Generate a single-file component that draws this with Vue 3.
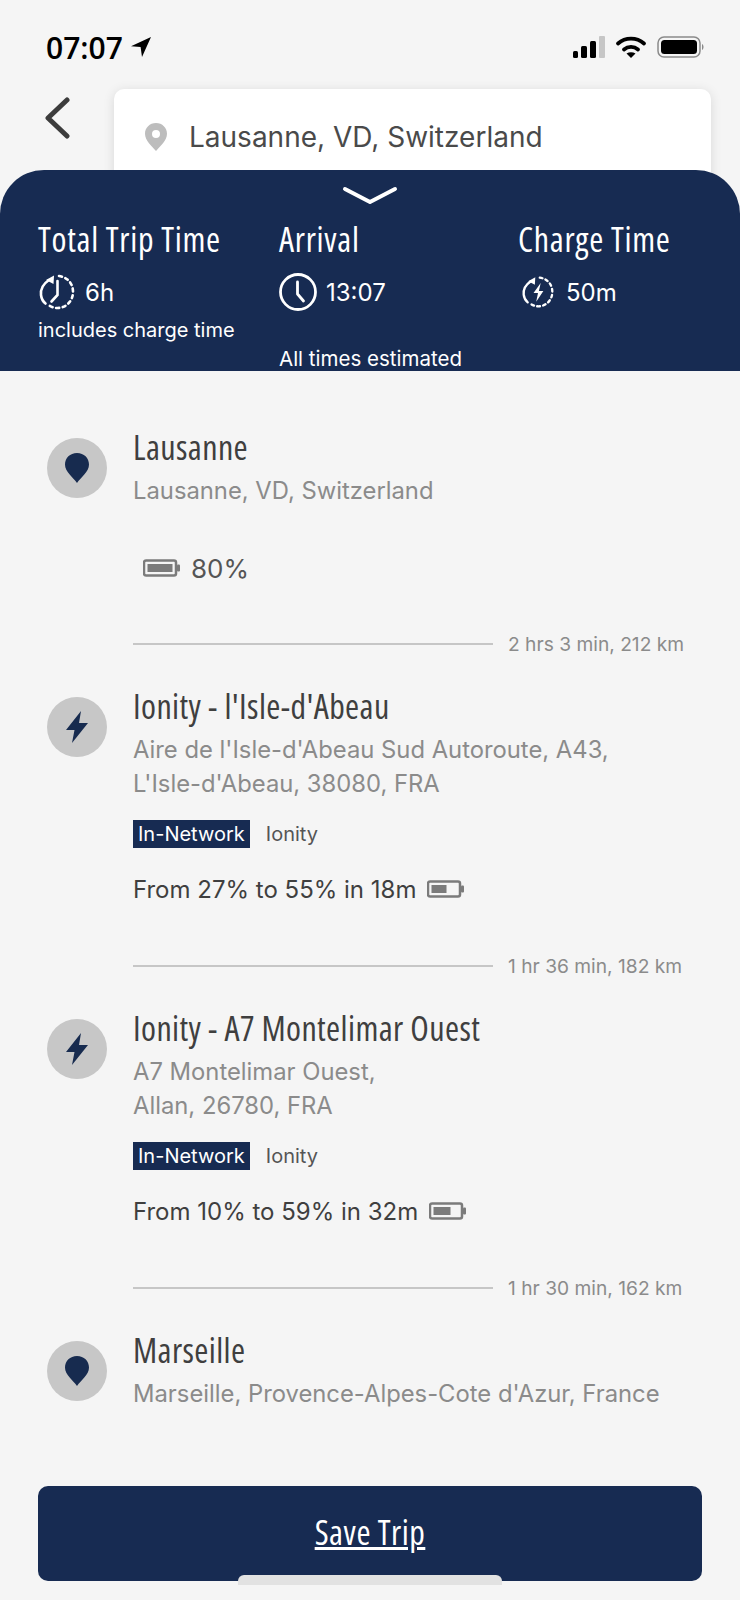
<template>
  <div class="screen">
    <header class="status">
      <div class="status-time">
        <span>07:07</span>
        <svg width="22" height="22" viewBox="0 0 22 22"><path d="M21 1 1 10.200l9.600.9 1.400 9.900z" fill="#000"/></svg>
      </div>
      <div class="status-icons">
        <svg width="32" height="22" viewBox="0 0 32 22">
          <rect x="0" y="15" width="5" height="7" rx="1.500" fill="#000"/>
          <rect x="8" y="10" width="6" height="12" rx="1.500" fill="#000"/>
          <rect x="17" y="5" width="6" height="17" rx="1.500" fill="#000"/>
          <rect x="26" y="0" width="6" height="22" rx="1" fill="#c6c6c6"/>
        </svg>
        <svg width="32" height="24" viewBox="0 0 32 24" fill="none" stroke="#000" stroke-width="3.800" stroke-linecap="round">
          <path d="M3 8.500c7.500-6.600 18.500-6.600 26 0"/>
          <path d="M9 14.500c4-3.400 10-3.400 14 0"/>
          <path d="m16 23-4.500-4.400c2.700-1.700 6.300-1.700 9 0z" fill="#000" stroke="none"/>
        </svg>
        <svg width="48" height="22" viewBox="0 0 48 22">
          <rect x="1" y="1" width="42" height="20" rx="6" fill="none" stroke="#8a8a8a" stroke-width="1.500"/>
          <rect x="4" y="4" width="36" height="14" rx="3.500" fill="#000"/>
          <path d="M45 8c2 .8 2 5.200 0 6z" fill="#8a8a8a"/>
        </svg>
      </div>
    </header>

    <div class="search-row">
      <svg class="back" width="26" height="42" viewBox="0 0 26 42" fill="none" stroke="#3c3c3c" stroke-width="5" stroke-linecap="round" stroke-linejoin="round">
        <path d="M23 3 4 21l19 18" />
      </svg>
      <div class="search-card">
        <svg width="24" height="30" viewBox="0 0 24 30">
          <path fill-rule="evenodd" d="M12 1C5.700 1 1 5.800 1 11.800 1 18.500 8 24.500 12 29c4-4.500 11-10.500 11-17.200C23 5.800 18.300 1 12 1zm0 7a4 4 0 1 1 0 8 4 4 0 0 1 0-8z" fill="#bdbdbd"/>
        </svg>
        <span>Lausanne, VD, Switzerland</span>
      </div>
    </div>

    <section class="summary">
      <svg class="chevron" width="56" height="20" viewBox="0 0 56 20" fill="none" stroke="#fff" stroke-width="4" stroke-linecap="round" stroke-linejoin="round">
        <path d="M3 3l25 13L53 3" />
      </svg>
      <div class="summary-grid">
        <div class="summary-col">
          <h3>Total Trip Time</h3>
          <div class="summary-value">
            <svg width="38" height="38" viewBox="0 0 38 38" fill="none" stroke="#fff" stroke-width="2.600" stroke-linecap="round">
              <path d="M11 7C5 11 2.500 17 3 22c.4 3.500 2 6.500 4.500 8.500"/>
              <path d="M8 7l8-4.500-.5 8.500z" fill="#fff" stroke="none"/>
              <path d="M21 3c8 1 14 7 14 16 0 9-7 16-15.500 16-4 0-7-1.500-9-3" stroke-dasharray="3 3.600"/>
              <path d="M19.500 8v14l-6 6.500"/>
            </svg>
            <span>6h</span>
          </div>
          <p class="includes">includes charge time</p>
        </div>
        <div class="summary-col">
          <h3>Arrival</h3>
          <div class="summary-value">
            <svg width="38" height="38" viewBox="0 0 38 38" fill="none" stroke="#fff" stroke-width="2.800" stroke-linecap="round" stroke-linejoin="round">
              <circle cx="19" cy="19" r="17.500"/>
              <path d="M18.500 9v12l6 7"/>
            </svg>
            <span>13:07</span>
          </div>
          <p class="estimated">All times estimated</p>
        </div>
        <div class="summary-col">
          <h3>Charge Time</h3>
          <div class="summary-value charge-time">
            <svg width="34" height="36" viewBox="0 0 38 38" fill="none" stroke="#fff" stroke-width="2.600" stroke-linecap="round">
              <path d="M11 7C5 11 2.500 17 3 22c.4 3.500 2 6.500 4.500 8.500"/>
              <path d="M8 7l8-4.500-.5 8.500z" fill="#fff" stroke="none"/>
              <path d="M21 3c8 1 14 7 14 16 0 9-7 16-15.500 16-4 0-7-1.500-9-3" stroke-dasharray="3 3.600"/>
              <path d="M22 9l-8 11h5l-2 10 8-12h-5z" fill="#fff" stroke="none"/>
            </svg>
            <span>50m</span>
          </div>
        </div>
      </div>
    </section>

    <main class="stops">
      <template v-for="stop in stops" :key="stop.title">
        <article class="stop">
          <div class="stop-icon">
            <svg v-if="stop.kind === 'pin'" width="26" height="32" viewBox="0 0 26 32">
              <path d="M13 1C6 1 1 6 1 12.500 1 20 9 25 13 31c4-6 12-11 12-18.500C25 6 20 1 13 1z" fill="#172b4f"/>
            </svg>
            <svg v-else width="24" height="34" viewBox="0 0 24 34">
              <path d="M16 1 1 20h8.500L7 33l16-20h-9z" fill="#172b4f"/>
            </svg>
          </div>
          <div class="stop-body">
            <h2>{{ stop.title }}</h2>
            <p v-for="line in stop.address" :key="line" class="address">{{ line }}</p>
            <div v-if="stop.network" class="network">
              <span class="tag">In-Network</span>
              <span class="provider">{{ stop.network }}</span>
            </div>
            <div v-if="stop.charge" class="charge">
              <span>{{ stop.charge }}</span>
              <svg class="battery" width="38" height="20" viewBox="0 0 38 20">
                <rect x="1" y="2.500" width="32" height="15" rx="2" fill="none" stroke="#7b7b7b" stroke-width="2.500"/>
                <rect x="4.500" y="6" :width="stop.level" height="8" fill="#7b7b7b"/>
                <rect x="34" y="6.500" width="3" height="7" rx="1" fill="#7b7b7b"/>
              </svg>
            </div>
            <div v-if="stop.start" class="start">
              <svg width="38" height="20" viewBox="0 0 38 20">
                <rect x="1" y="2.500" width="32" height="15" rx="2" fill="none" stroke="#7b7b7b" stroke-width="2.500"/>
                <rect x="4.500" y="6" width="25" height="8" fill="#7b7b7b"/>
                <rect x="34" y="6.500" width="3" height="7" rx="1" fill="#7b7b7b"/>
              </svg>
              <span>{{ stop.start }}</span>
            </div>
          </div>
        </article>
        <div v-if="stop.leg" class="leg">
          <span class="leg-line"></span>
          <span class="leg-text">{{ stop.leg }}</span>
        </div>
      </template>
    </main>

    <footer class="footer">
      <button type="button" class="save">Save Trip</button>
    </footer>
    <div class="home-bar"></div>
  </div>
</template>

<script setup>
const stops = [
  {
    kind: 'pin',
    title: 'Lausanne',
    address: ['Lausanne, VD, Switzerland'],
    start: '80%',
    leg: '2 hrs 3 min, 212 km',
  },
  {
    kind: 'bolt',
    title: "Ionity - l'Isle-d'Abeau",
    address: ["Aire de l'Isle-d'Abeau Sud Autoroute, A43,", "L'Isle-d'Abeau, 38080, FRA"],
    network: 'Ionity',
    charge: 'From 27% to 55% in 18m',
    level: 15,
    leg: '1 hr 36 min, 182 km',
  },
  {
    kind: 'bolt',
    title: 'Ionity - A7 Montelimar Ouest',
    address: ['A7 Montelimar Ouest,', 'Allan, 26780, FRA'],
    network: 'Ionity',
    charge: 'From 10% to 59% in 32m',
    level: 17,
    leg: '1 hr 30 min, 162 km',
  },
  {
    kind: 'pin',
    title: 'Marseille',
    address: ["Marseille, Provence-Alpes-Cote d'Azur, France"],
  },
]
</script>

<style>
body { margin: 0; background: #f5f5f5; }
</style>

<style scoped>
.screen { position: relative; width: 740px; height: 1600px; overflow: hidden; background: #f5f5f5; font-family: Inter, "Noto Sans", sans-serif; color: #3f3f3f; }

.status { height: 89px; box-sizing: border-box; padding: 29px 35px 0 46px; display: flex; justify-content: space-between; align-items: flex-start; }
.status-time { display: flex; align-items: center; gap: 7px; height: 36px; font-family: "Open Sans", sans-serif; font-size: 30px; font-weight: 600; color: #000; }
.status-icons { display: flex; align-items: center; gap: 10px; height: 36px; }

.search-row { display: flex; align-items: flex-start; height: 91px; padding-left: 44px; }
.back { margin-top: 8px; }
.search-card { margin-left: 44px; width: 597px; height: 100%; box-sizing: border-box; padding: 30px 0 0 30px; display: flex; align-items: flex-start; gap: 21px; background: #fff; border-radius: 10px 10px 0 0; box-shadow: 0 2px 12px rgba(0,0,0,.12); font-size: 28px; line-height: 36px; color: #4a4a4a; }
.search-card svg { margin-top: 3px; }

.summary { position: relative; z-index: 1; height: 201px; margin-top: -10px; box-sizing: border-box; padding-top: 16px; background: #172b52; border-radius: 44px 44px 0 0; color: #fff; text-align: left; }
.chevron { display: block; margin: 0 auto; }
.summary-grid { display: grid; grid-template-columns: 241px 239px 1fr; padding: 14px 0 0 38px; }
.summary-col h3 { margin: 0; font-family: "Open Sans", sans-serif; font-stretch: 75%; font-size: 34px; letter-spacing: .7px; line-height: 38px; font-weight: 400; white-space: nowrap; }
.summary-value { display: flex; align-items: center; gap: 9px; height: 38px; margin-top: 15px; font-size: 24px; }
.summary-value.charge-time { gap: 11px; padding-left: 3px; }
.includes { margin: 5px 0 0; font-size: 20px; line-height: 28px; white-space: nowrap; }
.estimated { margin: 34px 0 0; font-size: 20.500px; line-height: 28px; }

.stops { padding-top: 61px; }
.stop { display: flex; padding-left: 47px; }
.stop-icon { flex: none; width: 60px; height: 60px; margin-top: 6px; display: flex; align-items: center; justify-content: center; border-radius: 50%; background: #c7c7c7; }
.stop-body { margin-left: 26px; }
.stop-body h2 { margin: -2px 0 10px; font-family: "Open Sans", sans-serif; font-stretch: 75%; font-size: 34px; letter-spacing: .4px; line-height: 34px; font-weight: 400; color: #3f3f3f; }
.address { margin: 0; font-size: 23.800px; line-height: 34px; color: #8b8b8b; white-space: nowrap; }
.network { display: flex; align-items: center; gap: 16px; margin-top: 19px; height: 28px; }
.tag { height: 28px; box-sizing: border-box; padding: 0 5px; display: flex; align-items: center; background: #172b52; color: #fff; font-size: 20px; }
.provider { font-size: 20px; color: #555; }
.charge { display: flex; align-items: center; gap: 11px; margin: 24px 0 1px; height: 34px; font-size: 24px; color: #3f3f3f; }
.start { display: flex; align-items: center; gap: 10px; margin: 43px 0 0 10px; height: 34px; font-size: 26px; color: #555; }

.leg { display: flex; align-items: center; gap: 15px; padding-left: 133px; height: 20px; }
.leg-line { width: 360px; height: 2px; background: #c6c6c6; }
.leg-text { font-size: 19.200px; color: #8b8b8b; white-space: nowrap; }
.stop + .leg { margin-top: 49px; margin-bottom: 37px; }

.footer { position: absolute; left: 38px; right: 38px; top: 1486px; }
.save { display: block; width: 100%; height: 95px; padding: 0 0 4px; border: 0; border-radius: 10px; background: #172b52; color: #fff; font-family: "Open Sans", sans-serif; font-stretch: 75%; font-size: 34px; letter-spacing: .5px; text-decoration: underline; }
.home-bar { position: absolute; left: 238px; top: 1575px; width: 264px; height: 10px; border-radius: 6px 6px 0 0; background: #e2e2e2; }
</style>
